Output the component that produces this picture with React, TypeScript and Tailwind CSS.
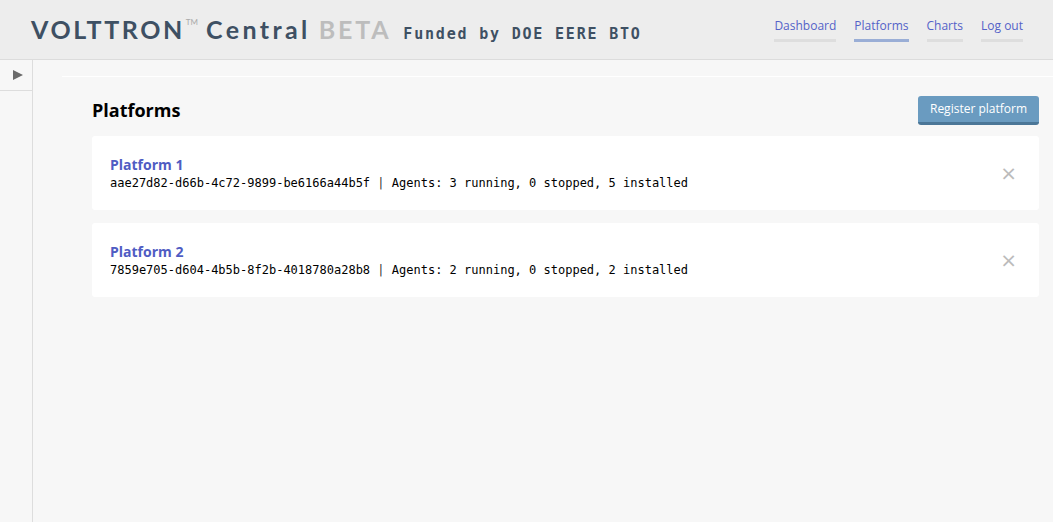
import React from "react"

const navLinks = [
  { label: "Dashboard", active: false },
  { label: "Platforms", active: true },
  { label: "Charts", active: false },
  { label: "Log out", active: false },
]

const platforms = [
  {
    name: "Platform 1",
    uuid: "aae27d82-d66b-4c72-9899-be6166a44b5f",
    agents: "Agents: 3 running, 0 stopped, 5 installed",
  },
  {
    name: "Platform 2",
    uuid: "7859e705-d604-4b5b-8f2b-4018780a28b8",
    agents: "Agents: 2 running, 0 stopped, 2 installed",
  },
]

function Header() {
  return (
    <header className="h-[60px] flex items-center justify-between bg-[#ededed] border-b border-[#dcdcdc] pl-[31px] pr-[30px]">
      <div className="flex items-baseline pt-[1px]">
        <span className="font-['Lato',sans-serif] font-bold text-[25px] tracking-[2.6px] text-[#3e5063]">
          VOLTTRON
        </span>
        <span className="font-['Lato',sans-serif] text-[8px] text-[#aaa] self-start mt-[5px] ml-[1px] mr-[8px]">
          TM
        </span>
        <span className="font-['Lato',sans-serif] font-bold text-[25px] tracking-[3.4px] text-[#3e5063]">
          Central
        </span>
        <span className="font-['Lato',sans-serif] font-bold text-[25px] tracking-[2.8px] text-[#bdbdbd] ml-[8px]">
          BETA
        </span>
        <span className="font-['DejaVu_Sans_Mono',monospace] font-bold text-[15px] tracking-[1.8px] text-[#3e5063] ml-[12px]">
          Funded by DOE EERE BTO
        </span>
      </div>
      <nav className="flex gap-[18px]">
        {navLinks.map((l) => (
          <a
            key={l.label}
            className={`font-['Open_Sans',sans-serif] text-[12px] leading-[18px] text-[#5462c8] pb-[4px] border-b-[3px] ${
              l.active ? "border-[#9aaed6]" : "border-[#dedede]"
            }`}
          >
            {l.label}
          </a>
        ))}
      </nav>
    </header>
  )
}

function PlatformCard({ name, uuid, agents }) {
  return (
    <div className="bg-white rounded-[3px] flex items-center justify-between pl-[18px] pr-[22px] py-[19px]">
      <div>
        <div className="font-['Open_Sans',sans-serif] font-bold text-[14px] leading-[20px] text-[#4f5cc3]">
          {name}
        </div>
        <div className="font-['DejaVu_Sans_Mono',monospace] text-[12px] leading-[16px] text-black">
          {uuid} <span className="text-[#333]">|</span> {agents}
        </div>
      </div>
      <span className="text-[#bbb] text-[20px] leading-none font-['DejaVu_Sans',sans-serif]">×</span>
    </div>
  )
}

export default function App() {
  return (
    <div className="w-[1053px] h-[522px] bg-[#f7f7f7] flex flex-col overflow-hidden">
      <Header />
      <div className="flex flex-1">
        <aside className="w-[33px] border-r border-[#dddddd] bg-[#f7f7f7]">
          <div className="h-[31px] border-b border-[#dddddd] flex items-center justify-center">
            <svg width="12" height="12" viewBox="0 0 12 12" className="ml-[4px]">
              <path d="M1 1 L11 6 L1 11 Z" fill="#6b6b6b" />
            </svg>
          </div>
        </aside>
        <main className="flex-1">
          <div className="ml-[29px] mt-[16px] border-t border-white" />
          <div className="pl-[59px] pr-[14px] pt-[19px]">
            <div className="flex items-center justify-between mb-[11px]">
              <h2 className="font-['Open_Sans',sans-serif] font-bold text-[18px] text-black">Platforms</h2>
              <button className="font-['Open_Sans',sans-serif] text-[12px] text-white bg-[#6a9bc0] border-b-[3px] border-[#4b7697] rounded-[3px] px-[12px] h-[29px] leading-[26px]">
                Register platform
              </button>
            </div>
            <div className="flex flex-col gap-[13px]">
              {platforms.map((p) => (
                <PlatformCard key={p.name} {...p} />
              ))}
            </div>
          </div>
        </main>
      </div>
    </div>
  )
}
